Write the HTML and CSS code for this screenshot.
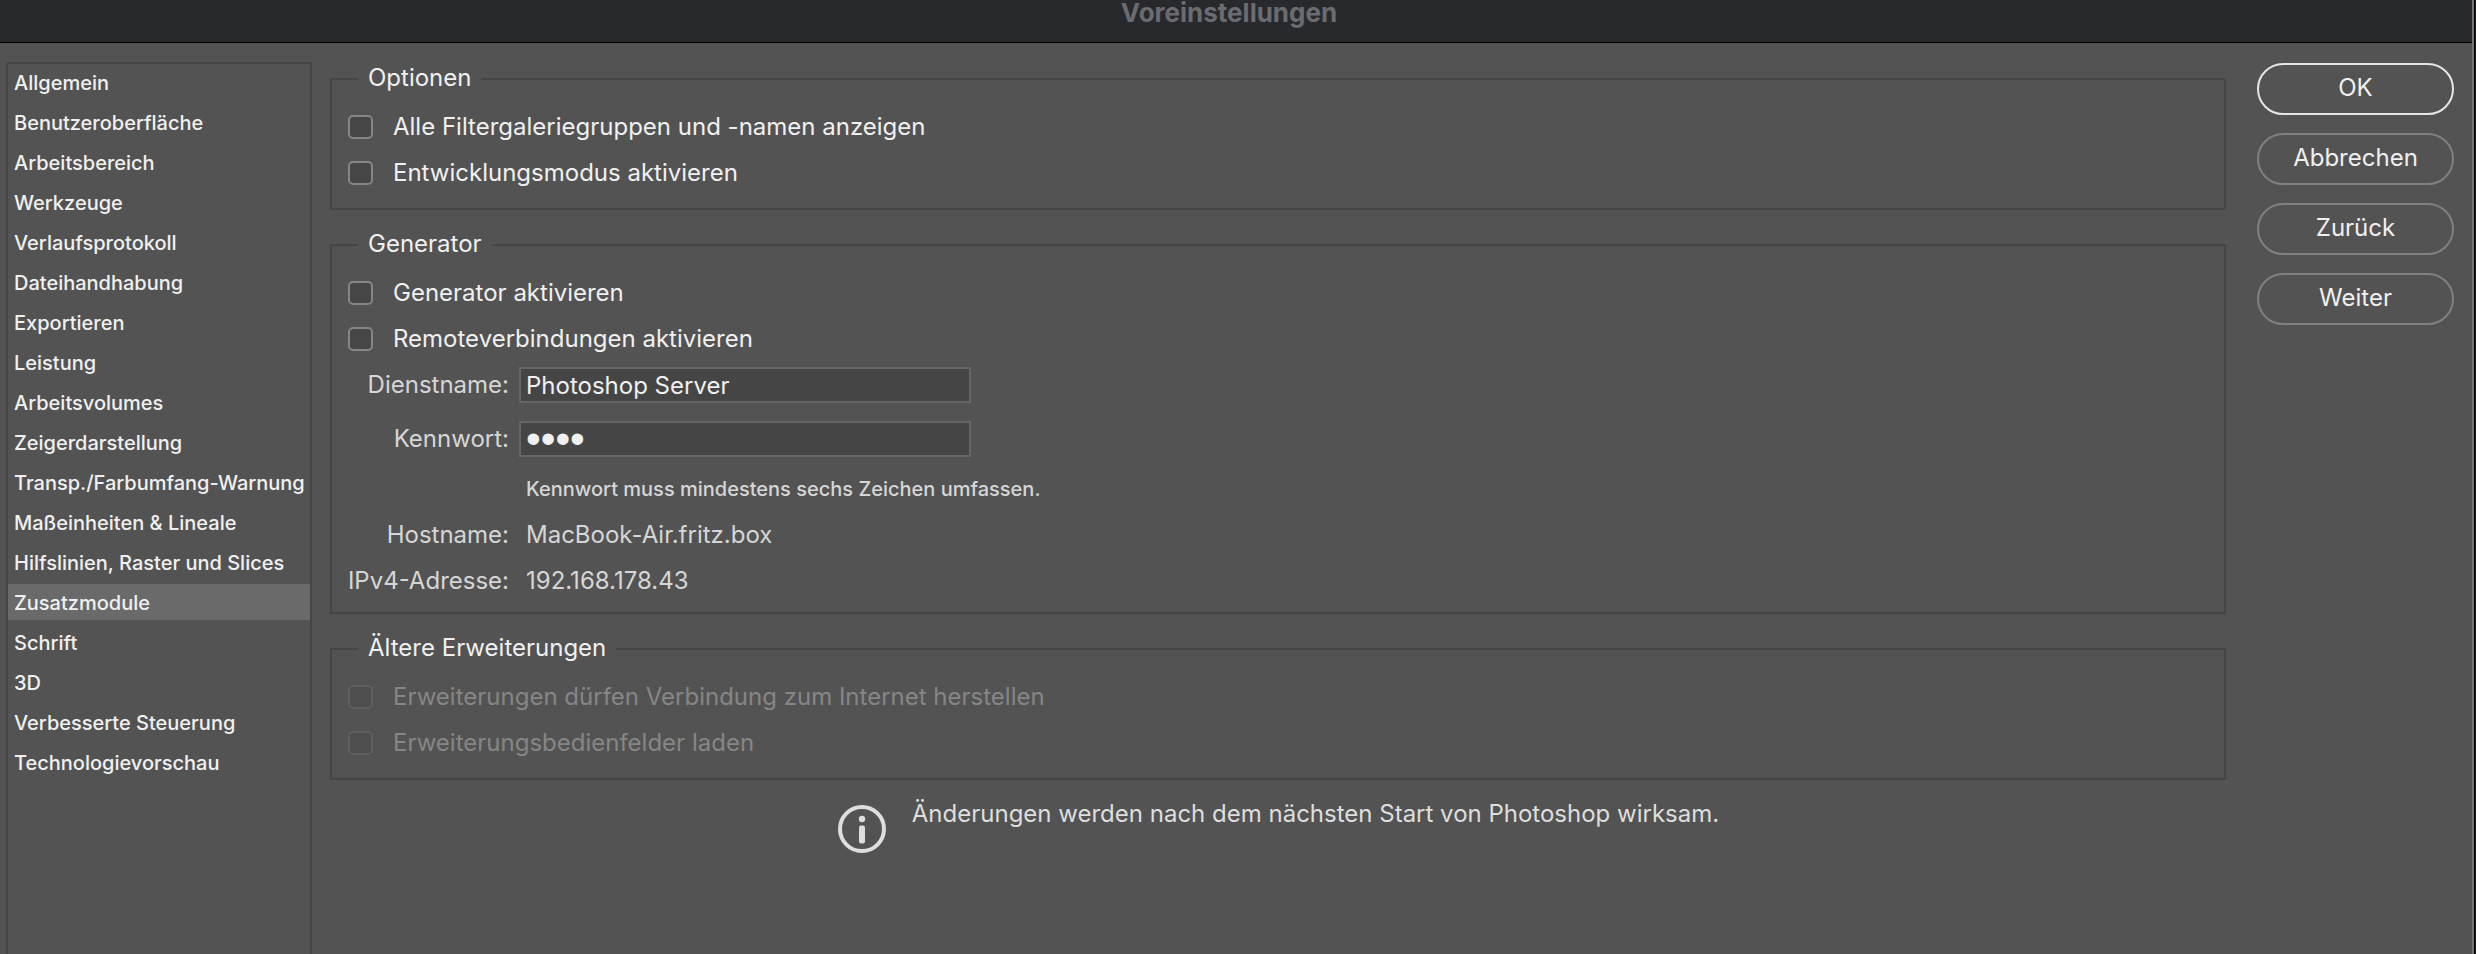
FILE: index.html
```html
<!DOCTYPE html>
<html lang="de">
<head>
  <meta charset="UTF-8">
  <meta name="viewport" content="width=device-width, initial-scale=1.0">
  <title>Voreinstellungen</title>
  <link rel="stylesheet" href="styles.css">
</head>
<body>
  <div class="window">
    <header class="titlebar">
      <h1>Voreinstellungen</h1>
    </header>
    <div class="content">
      <nav class="sidebar">
        <a href="#">Allgemein</a>
        <a href="#">Benutzeroberfläche</a>
        <a href="#">Arbeitsbereich</a>
        <a href="#">Werkzeuge</a>
        <a href="#">Verlaufsprotokoll</a>
        <a href="#">Dateihandhabung</a>
        <a href="#">Exportieren</a>
        <a href="#">Leistung</a>
        <a href="#">Arbeitsvolumes</a>
        <a href="#">Zeigerdarstellung</a>
        <a href="#">Transp./Farbumfang-Warnung</a>
        <a href="#">Maßeinheiten &amp; Lineale</a>
        <a href="#">Hilfslinien, Raster und Slices</a>
        <a href="#" class="active">Zusatzmodule</a>
        <a href="#">Schrift</a>
        <a href="#">3D</a>
        <a href="#">Verbesserte Steuerung</a>
        <a href="#">Technologievorschau</a>
      </nav>

      <main class="settings">
        <fieldset>
          <legend>Optionen</legend>
          <div class="checks">
            <label class="check"><input type="checkbox"> Alle Filtergaleriegruppen und -namen anzeigen</label>
            <label class="check"><input type="checkbox"> Entwicklungsmodus aktivieren</label>
          </div>
        </fieldset>

        <fieldset>
          <legend>Generator</legend>
          <label class="check"><input type="checkbox"> Generator aktivieren</label>
          <label class="check"><input type="checkbox"> Remoteverbindungen aktivieren</label>
          <div class="form-row">
            <label for="service">Dienstname:</label>
            <input type="text" id="service" value="Photoshop Server">
          </div>
          <div class="form-row password-row">
            <label for="password">Kennwort:</label>
            <input type="password" id="password" value="1234">
          </div>
          <div class="form-row">
            <span class="value hint">Kennwort muss mindestens sechs Zeichen umfassen.</span>
          </div>
          <div class="form-row">
            <span class="name">Hostname:</span>
            <span class="value">MacBook-Air.fritz.box</span>
          </div>
          <div class="form-row">
            <span class="name">IPv4-Adresse:</span>
            <span class="value">192.168.178.43</span>
          </div>
        </fieldset>

        <fieldset>
          <legend>Ältere Erweiterungen</legend>
          <div class="checks">
            <label class="check disabled"><input type="checkbox" disabled> Erweiterungen dürfen Verbindung zum Internet herstellen</label>
            <label class="check disabled"><input type="checkbox" disabled> Erweiterungsbedienfelder laden</label>
          </div>
        </fieldset>

        <div class="notice">
          <svg width="50" height="50" viewBox="0 0 50 50" aria-hidden="true">
            <circle cx="25" cy="25" r="22" fill="none" stroke="#dedede" stroke-width="4"/>
            <circle cx="25" cy="15" r="3.2" fill="#dedede"/>
            <rect x="22" y="21.5" width="6" height="18" rx="2" fill="#dedede"/>
          </svg>
          <p>Änderungen werden nach dem nächsten Start von Photoshop wirksam.</p>
        </div>
      </main>

      <div class="buttons">
        <button type="submit" class="primary">OK</button>
        <button type="button">Abbrechen</button>
        <button type="button">Zurück</button>
        <button type="button">Weiter</button>
      </div>
    </div>
  </div>
</body>
</html>
```
FILE: styles.css
```css
* {
  box-sizing: border-box;
}

body {
  margin: 0;
  background-color: #1c1c1e;
  color: #f0f0f0;
  font-family: Inter, "Liberation Sans", sans-serif;
  font-size: 24px;
  line-height: 28px;
}

.window {
  display: flex;
  flex-direction: column;
  min-height: 100vh;
  margin-right: 1px;
  border-right: 1px solid #000;
  background-color: #535353;
  box-shadow: inset -2px 0 #737373;
}

.titlebar {
  height: 43px;
  margin-right: 2px;
  background-color: #28292d;
  border-bottom: 1px solid #000;
}

h1 {
  margin: 0;
  padding-right: 14px;
  font-size: 26px;
  font-weight: 700;
  line-height: 26px;
  text-align: center;
  color: #6b6c70;
}

.content {
  flex: 1;
  display: flex;
  padding: 19px 20px 0 6px;
}

.sidebar {
  display: flex;
  flex-direction: column;
  gap: 4px;
  width: 306px;
  border: 2px solid #454545;
  border-bottom: none;
}

.sidebar a {
  padding: 2px 0 0 6px;
  color: #f0f0f0;
  font-size: 20px;
  font-weight: 500;
  line-height: 34px;
  text-decoration: none;
  white-space: nowrap;
}

.sidebar .active {
  background-color: #6a6a6a;
}

.settings {
  flex: 1;
  display: flex;
  flex-direction: column;
  gap: 21px;
  padding-top: 3px;
  margin: 0 31px 0 18px;
}

fieldset {
  margin: 0;
  padding: 11px 16px 8px;
  border: 2px solid #454545;
}

legend {
  margin-left: 10px;
  padding: 0 10px 2px;
  line-height: 26px;
}

.checks {
  padding-bottom: 4px;
}

.check {
  display: flex;
  align-items: center;
  gap: 20px;
  height: 46px;
}

.check input {
  appearance: none;
  width: 25px;
  height: 24px;
  margin: 0;
  border: 2px solid #868686;
  border-radius: 5px;
  background-color: #464646;
}

.disabled {
  color: #868686;
}

.disabled input {
  border-color: #5f5f5f;
  background-color: #4f4f4f;
}

.form-row {
  display: grid;
  grid-template-columns: 161px 452px;
  column-gap: 10px;
  align-items: center;
  height: 46px;
  color: #d6d6d6;
}

.form-row label, .name {
  justify-self: end;
  white-space: nowrap;
}

.form-row input {
  height: 36px;
  padding: 0 5px;
  border: 2px solid #666;
  background-color: #454545;
  color: #f0f0f0;
  font: inherit;
}

.password-row {
  margin: 8px 0 4px;
}

/* bigger dots */
.password-row input {
  font-family: "Liberation Sans", sans-serif;
  font-size: 42px;
}

.value {
  grid-column: 2;
  padding-left: 7px;
  white-space: nowrap;
}

.hint {
  font-size: 20px;
  font-weight: 500;
}

.notice {
  display: flex;
  justify-content: center;
  gap: 25px;
  margin-top: -1px;
  color: #dedede;
}

.notice svg {
  margin-top: 4px;
}

.notice p {
  margin: 0;
}

.buttons {
  display: flex;
  flex-direction: column;
  gap: 18px;
  width: 197px;
  padding-top: 1px;
}

button {
  height: 52px;
  padding: 0 0 2px;
  border: 2px solid #808080;
  border-radius: 26px;
  background: none;
  color: #f0f0f0;
  font: inherit;
}

.primary {
  border-color: #e6e6e6;
}
```
